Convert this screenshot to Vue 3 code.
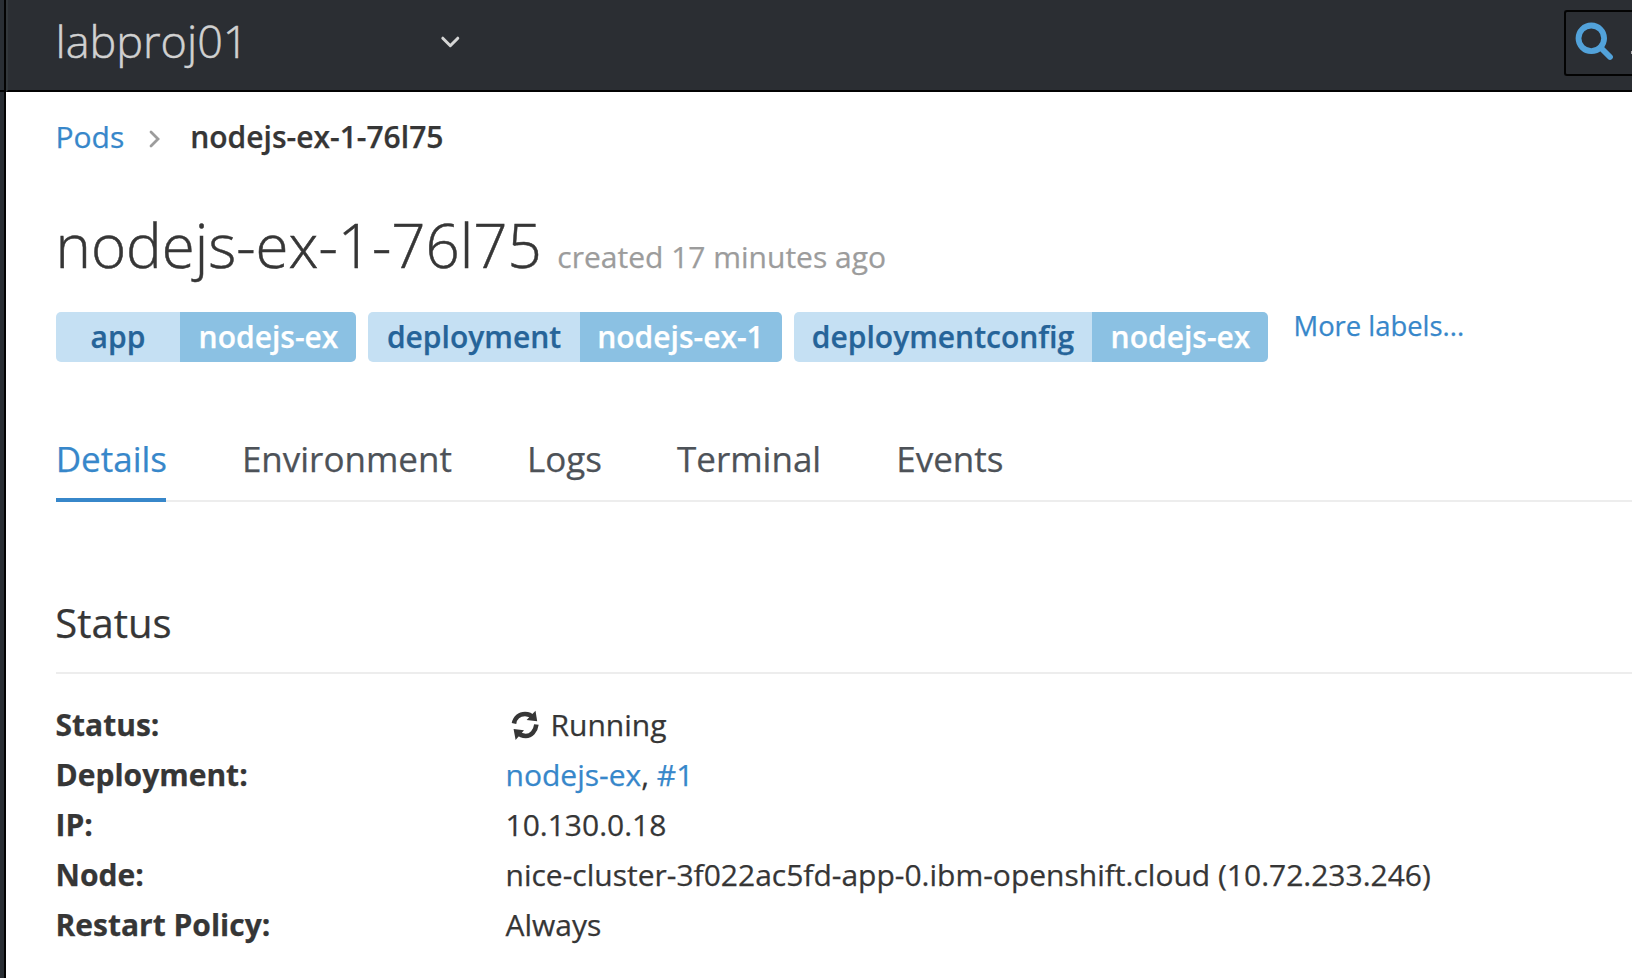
<script setup>
const labels = [
  { key: 'app', value: 'nodejs-ex', k: 'k1', v: 'v1' },
  { key: 'deployment', value: 'nodejs-ex-1', k: 'k2', v: 'v2' },
  { key: 'deploymentconfig', value: 'nodejs-ex', k: 'k3', v: 'v1' },
]
const tabs = ['Details', 'Environment', 'Logs', 'Terminal', 'Events']
</script>

<template>
  <div class="page">
    <aside class="rail"><div class="rail-top"></div></aside>
    <div class="main">
      <header class="bar">
        <span class="project">labproj01</span>
        <svg class="caret" width="20" height="14" viewBox="0 0 20 14"><path d="M2.8 3.2 L10.3 10.7 L17.8 3.2" /></svg>
        <div class="search">
          <svg width="40" height="40" viewBox="0 0 40 40">
            <circle cx="17.3" cy="16.3" r="12.8" />
            <path d="M26.5 25.5 L36 35" />
          </svg>
          <span class="dot"></span>
        </div>
      </header>
      <main class="content">
        <nav class="crumbs">
          <a>Pods</a>
          <svg width="12" height="18" viewBox="0 0 12 18"><path d="M2 2 L9 9 L2 16" /></svg>
          <strong>nodejs-ex-1-76l75</strong>
        </nav>
        <h1><span class="title">nodejs-ex-1-76l75</span><small>created 17 minutes ago</small></h1>
        <div class="labels">
          <div v-for="l in labels" :key="l.key" class="label">
            <span class="key" :class="l.k">{{ l.key }}</span><span class="value" :class="l.v">{{ l.value }}</span>
          </div>
          <a class="more">More labels...</a>
        </div>
        <ul class="tabs">
          <li v-for="(t, i) in tabs" :key="t" :class="{ active: i === 0 }"><span>{{ t }}</span></li>
        </ul>
        <h2><span>Status</span></h2>
        <dl>
          <dt>Status:</dt>
          <dd class="running">
            <svg width="28" height="32" viewBox="0 0 28 32">
              <path class="arc" d="M3 14.5 C4 8.5 8.5 5 14 5 C17.5 5 20.3 6.4 22 8.5" />
              <path class="tip" d="M24.5 1.8 L26.2 12.3 L15.6 11 Z" />
              <path class="arc" d="M25.4 15.5 C24.6 22 20.2 27 14.8 27 C11.5 27 8.8 25.7 7 23.5" />
              <path class="tip" d="M2.6 20 L13 21.3 L4.6 31 Z" />
            </svg>
            <span>Running</span>
          </dd>
          <dt>Deployment:</dt>
          <dd><a>nodejs-ex</a>, <a>#1</a></dd>
          <dt>IP:</dt>
          <dd>10.130.0.18</dd>
          <dt>Node:</dt>
          <dd><span class="node">nice-cluster-3f022ac5fd-app-0.ibm-openshift.cloud (10.72.233.246)</span></dd>
          <dt>Restart Policy:</dt>
          <dd>Always</dd>
        </dl>
      </main>
    </div>
  </div>
</template>

<style>
body { overflow: hidden; background: #fff; }
</style>
<style scoped>
* { box-sizing: border-box; }
.page { display: flex; width: 1632px; height: 978px; overflow: hidden; font-family: "Open Sans", "Noto Sans", sans-serif; font-size: 30px; line-height: 50px; color: #363636; background: #fff; white-space: nowrap; -webkit-text-stroke: 0.25px currentColor; }
.rail { width: 6px; background: #292e34; border-right: 2px solid #030303; flex: none; }
.rail-top { height: 92px; border-bottom: 2px solid #030303; background: #292e34; }
.main { flex: 1; min-width: 0; }
.bar { height: 92px; background: #2b2e33; border-bottom: 2px solid #030303; border-left: 2px solid #33383c; padding-left: 47.5px; display: flex; align-items: flex-start; }
.project { width: 384.5px; font-size: 45px; font-weight: 300; line-height: 64px; padding-top: 9px; color: #d1d1d1; -webkit-text-stroke: 0.5px #d1d1d1; }
.caret { margin-top: 35px; }
.caret path { fill: none; stroke: #d6d6d6; stroke-width: 3; stroke-linecap: round; stroke-linejoin: round; }
.search { margin: 10px 0 0 auto; width: 68px; height: 66px; border: 2px solid #030303; border-right: 0; border-radius: 3px 0 0 3px; padding: 10px 0 0 8px; display: flex; }
.search svg { flex: none; }
.search circle, .search path { fill: none; stroke: #52a2da; stroke-width: 5.8; stroke-linecap: round; }
.dot { width: 1px; height: 3px; margin: 29px 0 0 17px; background: #aaa; }
.content { padding: 20px 0 0 50px; }
a { color: #3787ca; }
.crumbs { display: flex; height: 50px; align-items: center; margin-left: -0.5px; }
.crumbs svg { margin: 3px 29px 0 25px; }
.crumbs path { fill: none; stroke: #9c9c9c; stroke-width: 2.8; stroke-linecap: round; }
.crumbs strong { font-weight: 600; }
h1 { display: flex; align-items: baseline; gap: 15.5px; margin: 48px 0 0 -0.5px; height: 68px; line-height: 70px; font-size: 60px; font-weight: 300; }
.title { -webkit-text-stroke: 0.5px #363636; }
small { font-size: 30px; font-weight: 400; color: #9c9c9c; }
.labels { display: flex; margin-top: 34px; height: 50px; gap: 12px; font-weight: 600; }
.label { display: flex; border-radius: 5px; overflow: hidden; text-align: center; }
.key { background: #c5e0f3; color: #266499; }
.value { background: #8bc1e3; color: #fff; }
.k1 { width: 124px; } .k2 { width: 212px; } .k3 { width: 298px; }
.v1 { width: 176px; padding-left: 1px; } .v2 { width: 202px; padding-right: 1px; }
.more { font-size: 27.4px; font-weight: 400; line-height: 28px; margin-left: 13.5px; }
.tabs { display: flex; gap: 75.6px; list-style: none; margin: 76px 0 0; padding: 0; height: 64px; border-bottom: 2px solid #ededed; font-size: 35px; line-height: 42px; color: #4d5258; }
.tabs li { height: 64px; }
.tabs li span { margin: 0 -0.3px 0 -0.3px; }
.tabs .active { width: 110px; color: #3787ca; border-bottom: 4px solid #3787ca; }
h2 { margin: 94px 0 0; height: 78px; border-bottom: 2px solid #ededed; font-size: 40px; line-height: 54px; font-weight: 400; }
h2 span { margin-left: -0.7px; }
dl { display: grid; grid-template-columns: 450px 1fr; grid-auto-rows: 50px; margin: 26px 0 0 -0.5px; }
dt { font-weight: 700; }
dd { margin: 0; }
.running { display: flex; }
.running svg { margin: 9px 11.5px 0 5.5px; }
.arc { fill: none; stroke: #363636; stroke-width: 4.6; }
.tip { fill: #363636; }
.tabs .active + li { margin-left: 0.6px; }
</style>
